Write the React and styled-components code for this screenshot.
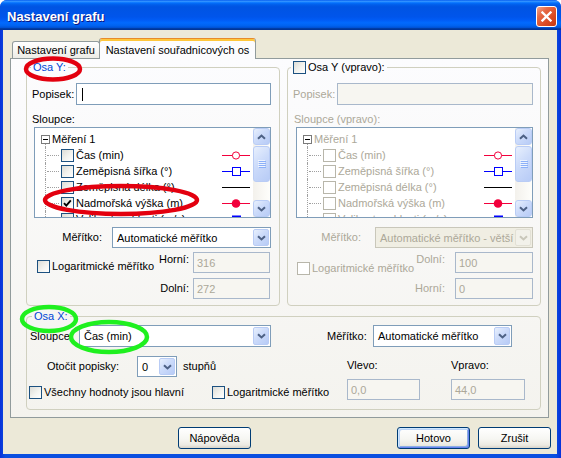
import React from 'react';
import styled, { createGlobalStyle, css } from 'styled-components';

const GlobalStyle = createGlobalStyle`
  html, body { margin: 0; padding: 0; background: #ffffff; }
  body {
    font-family: 'Liberation Sans', Tahoma, Arial, sans-serif;
    font-size: 11px;
    color: #000;
  }
  * { box-sizing: border-box; }
`;

const OFF = '#ACA899';

const Window = styled.div`
  position: relative;
  width: 561px;
  height: 458px;
  display: flex;
  flex-direction: column;
  overflow: hidden;
  border-radius: 7px 7px 0 0;
  background: linear-gradient(to right, #0831D9 0%, #0A4FE0 1%, #0A4FE0 99%, #0831D9 100%);
`;

const TitleBar = styled.div`
  height: 30px;
  flex: none;
  display: flex;
  align-items: center;
  padding: 3px 4px 0 7px;
  background: linear-gradient(to bottom, #0058EE 0%, #3593FF 4%, #288EFF 6%, #127DFF 8%, #036FFC 10%, #0262EE 14%, #0057E5 20%, #0054E3 24%, #0055EB 56%, #005BF5 66%, #026AFE 76%, #0062EF 86%, #0052D6 92%, #0040AB 94%, #003092 100%);
`;

const Title = styled.div`
  flex: 1;
  color: #fff;
  font-weight: bold;
  font-size: 13px;
  text-shadow: 1px 1px 0 #0A1883;
`;

const CloseBtn = styled.div`
  width: 21px;
  height: 21px;
  border: 1px solid #fff;
  border-radius: 3px;
  background: linear-gradient(135deg, #F3A58D 0%, #E66A45 30%, #DA4B24 65%, #C5380F 100%);
  display: flex;
  align-items: center;
  justify-content: center;
`;

const Frame = styled.div`
  flex: 1;
  margin: 0 4px 4px 3px;
  background: #ECE9D8;
  padding: 8px 8px 0 7px;
  display: flex;
  flex-direction: column;
`;

const TabStrip = styled.div`
  height: 20px;
  flex: none;
  display: flex;
  align-items: flex-end;
  padding-left: 2px;
`;

const Tab = styled.div`
  width: ${p => p.$w}px;
  display: flex;
  align-items: center;
  justify-content: center;
  white-space: nowrap;
  border: 1px solid #919B9C;
  border-radius: 3px 3px 0 0;
  ${p => p.$active ? css`
    height: 21px;
    margin: 0 0 -1px -1px;
    border-bottom: none;
    border-top-color: #E68B2C;
    box-shadow: inset 0 2px 0 #FFC73C;
    background: #FCFCFE;
    position: relative;
    z-index: 1;
    padding-top: 1px;
  ` : css`
    height: 17px;
    border-bottom: none;
    background: linear-gradient(to bottom, #FFFFFF 0%, #F7F7F4 50%, #ECEBE5 100%);
  `}
`;

const Panel = styled.div`
  height: 360px;
  flex: none;
  border: 1px solid #919B9C;
  background: linear-gradient(to bottom, #FCFCFE 0%, #F4F3EE 100%);
  padding: 2px 7px 0 15px;
`;

const TopGroups = styled.div`
  display: flex;
  gap: 7px;
`;

const Group = styled.fieldset`
  margin: ${p => p.$mt || 0}px 0 0 0;
  min-width: 0;
  width: ${p => p.$w}px;
  border: 1px solid #D0D0BF;
  border-radius: 4px;
  padding: 0 ${p => p.$pr ?? 8}px ${p => p.$pb ?? 6}px ${p => p.$pl ?? 5}px;
`;

const Legend = styled.legend`
  padding: 0 2px;
  margin-left: ${p => p.$ml || 0}px;
  line-height: 13px;
  height: 13px;
  color: ${p => p.$plain ? '#000' : '#0046D5'};
`;

const LegendInner = styled.span`
  display: inline-flex;
  align-items: center;
  gap: 2px;
  vertical-align: top;
  height: 13px;
`;

const FieldRow = styled.div`
  display: flex;
  align-items: ${p => p.$align || 'center'};
  justify-content: ${p => p.$justify || 'flex-start'};
  gap: ${p => p.$gap || 0}px;
  height: ${p => p.$h}px;
  margin-top: ${p => p.$mt || 0}px;
`;

const Label = styled.span`
  line-height: 13px;
  white-space: nowrap;
  flex: none;
  color: ${p => p.$off ? OFF : '#000'};
  ${p => p.$w != null && css`width: ${p.$w}px;`}
  margin: ${p => `${p.$mt || 0}px ${p.$mr || 0}px 0 ${p.$ml || 0}px`};
`;

const BlockLabel = styled.div`
  line-height: 13px;
  margin-top: ${p => p.$mt || 0}px;
  margin-left: ${p => p.$ml || 0}px;
  color: ${p => p.$off ? OFF : '#000'};
`;

const Spacer = styled.span`
  flex: 1;
`;

const TextBox = styled.div`
  ${p => p.$w != null ? css`width: ${p.$w}px; flex: none;` : css`flex: 1;`}
  height: ${p => p.$h || 21}px;
  border: 1px solid ${p => p.$off ? '#A9B8CB' : '#7F9DB9'};
  background: ${p => p.$off ? '#F7F6F1' : '#fff'};
  color: ${OFF};
  display: flex;
  align-items: center;
  padding-left: 3px;
  margin-right: ${p => p.$mr || 0}px;
  white-space: nowrap;
`;

const Caret = styled.span`
  width: 1px;
  height: 13px;
  margin-left: 2px;
  background: #000;
`;

const Combo = styled.div`
  width: ${p => p.$w}px;
  height: ${p => p.$h || 21}px;
  flex: none;
  border: 1px solid ${p => p.$off ? '#C9C7BA' : '#7F9DB9'};
  background: ${p => p.$off ? '#F0EEE3' : '#fff'};
  color: ${p => p.$off ? OFF : '#000'};
  display: flex;
  align-items: center;
  padding: 1px;
`;

const ComboText = styled.span`
  flex: 1;
  padding-left: 3px;
  white-space: nowrap;
  overflow: hidden;
`;

const blueBtn = css`
  background: linear-gradient(135deg, #E8F0FD 0%, #CCDBFA 45%, #B7CBF6 100%);
  border: 1px solid #B9CCF5;
  border-radius: 2px;
`;

const DropBtn = styled.span`
  width: 16px;
  align-self: stretch;
  flex: none;
  display: flex;
  align-items: center;
  justify-content: center;
  ${p => p.$off ? css`
    background: #F2F1EA;
    border: 1px solid #E2E0D5;
    border-radius: 2px;
  ` : blueBtn}
`;

const CheckWrap = styled.span`
  display: inline-flex;
  align-items: center;
  gap: 2px;
  flex: none;
  line-height: 13px;
  white-space: nowrap;
  color: ${p => p.$off ? OFF : '#000'};
  ${p => p.$w != null && css`width: ${p.$w}px;`}
  margin: ${p => `${p.$mt || 0}px 0 0 ${p.$ml || 0}px`};
`;

const Box = styled.span`
  width: 13px;
  height: 13px;
  flex: none;
  display: inline-flex;
  align-items: center;
  justify-content: center;
  border: 1px solid ${p => p.$off ? '#B8B6AA' : '#1C5180'};
  background: ${p => p.$off ? '#FFFFFF' : 'linear-gradient(135deg, #DCDCD6 0%, #F3F3EF 55%, #FFFFFF 100%)'};
`;

/* Tree */
const TreeBox = styled.div`
  width: 237px;
  height: 91px;
  margin: 1px 0 0 ${p => p.$ml || 0}px;
  border: 1px solid #7F9DB9;
  background: #fff;
  display: flex;
  overflow: hidden;
`;

const TreeList = styled.div`
  flex: 1;
  padding-top: 3px;
  overflow: hidden;
  color: ${p => p.$off ? OFF : '#000'};
`;

const TreeRow = styled.div`
  height: 16px;
  display: flex;
  align-items: center;
  white-space: nowrap;
`;

const Expander = styled.span`
  position: relative;
  width: 9px;
  height: 9px;
  margin: 0 2px 0 6px;
  flex: none;
  border: 1px solid #7A7A7A;
  background: #fff;
  &::before {
    content: '';
    position: absolute;
    left: 1px;
    top: 3px;
    width: 5px;
    height: 1px;
    background: #000;
  }
  &::after {
    content: '';
    position: absolute;
    left: 3px;
    top: 8px;
    height: 5px;
    border-left: 1px dotted #A0A0A0;
  }
`;

const Connector = styled.span`
  position: relative;
  width: 26px;
  align-self: stretch;
  flex: none;
  &::before {
    content: '';
    position: absolute;
    left: 10px;
    top: 0;
    bottom: 0;
    border-left: 1px dotted #A0A0A0;
  }
  &::after {
    content: '';
    position: absolute;
    left: 12px;
    right: 2px;
    top: 8px;
    border-top: 1px dotted #A0A0A0;
  }
`;

const ItemText = styled.span`
  margin-left: 2px;
  flex: 1;
`;

const MarkerSlot = styled.span`
  display: flex;
  margin-right: 3px;
  flex: none;
`;

const ScrollTrack = styled.div`
  width: 17px;
  flex: none;
  display: flex;
  flex-direction: column;
  background: linear-gradient(to right, #F3F1EC 0%, #FEFEFB 100%);
`;

const ScrollBtn = styled.div`
  height: 17px;
  flex: none;
  display: flex;
  align-items: center;
  justify-content: center;
  ${blueBtn}
  border-radius: 3px;
`;

const Thumb = styled.div`
  height: 36px;
  margin-top: 1px;
  flex: none;
  display: flex;
  align-items: center;
  justify-content: center;
  ${blueBtn}
  border-radius: 3px;
`;

const TrackFill = styled.div`
  flex: 1;
`;

/* Osa X */
const XBottom = styled.div`
  display: flex;
`;

const XLeft = styled.div`
  width: 317px;
  flex: none;
  display: flex;
  flex-direction: column;
`;

const ValueCol = styled.div`
  display: flex;
  flex-direction: column;
  width: ${p => p.$w}px;
  flex: none;
`;

const ButtonRow = styled.div`
  display: flex;
  margin: 9px -2px 0 0;
  padding-left: 168px;
`;

const Button = styled.button`
  width: 73px;
  height: 22px;
  padding: 0;
  margin-left: ${p => p.$ml || 0};
  border: 1px solid #003C74;
  border-radius: 3px;
  font-family: 'Liberation Sans', Tahoma, Arial, sans-serif;
  font-size: 11px;
  color: #000;
  background: linear-gradient(to bottom, #FFFFFF 0%, #F6F6F2 55%, #ECEAE2 85%, #D8D3C8 100%);
  ${p => p.$default && css`
    box-shadow: inset 1px 1px 0 #CEE7FF, inset -1px -1px 0 #6982EE, inset 2px 2px 0 #BCD4F6, inset -2px -2px 0 #89ADE4;
  `}
`;

const Overlay = styled.svg`
  position: absolute;
  left: 0;
  top: 0;
  pointer-events: none;
`;

/* drawings */
const Chevron = ({ dir = 'down', color = '#4D6185' }) => (
  <svg width="9" height="6" viewBox="0 0 9 6">
    <path
      d={dir === 'down' ? 'M1 1.2 L4.5 4.5 L8 1.2' : 'M1 4.8 L4.5 1.5 L8 4.8'}
      stroke={color}
      strokeWidth="2"
      fill="none"
    />
  </svg>
);

const Grip = () => (
  <svg width="8" height="8" viewBox="0 0 8 8">
    {[0.5, 2.5, 4.5, 6.5].map(y => (
      <g key={y}>
        <line x1="0" y1={y} x2="7" y2={y} stroke="#EEF4FE" strokeWidth="1" />
        <line x1="1" y1={y + 1} x2="8" y2={y + 1} stroke="#8CB0F8" strokeWidth="1" />
      </g>
    ))}
  </svg>
);

const CheckMark = () => (
  <svg width="11" height="11" viewBox="0 0 11 11">
    <path d="M2 5.2 L4.3 7.6 L8.8 2.4" stroke="#000" strokeWidth="1.9" fill="none" />
  </svg>
);

const CloseX = () => (
  <svg width="11" height="11" viewBox="0 0 11 11">
    <path d="M1.5 1.5 L9.5 9.5 M9.5 1.5 L1.5 9.5" stroke="#fff" strokeWidth="2.3" strokeLinecap="square" />
  </svg>
);

const Marker = ({ kind }) => {
  const col = { circle: '#F2003C', square: '#0000FF', line: '#000000', dot: '#F2003C', block: '#0000FF' }[kind];
  return (
    <svg width="28" height="11" viewBox="0 0 28 11">
      <line x1="0" y1="5.5" x2="28" y2="5.5" stroke={col} strokeWidth="1" />
      {kind === 'circle' && <circle cx="14" cy="5.5" r="3.6" fill="#fff" stroke={col} strokeWidth="1" />}
      {kind === 'square' && <rect x="10.5" y="1.5" width="8" height="8" fill="#fff" stroke={col} strokeWidth="1" />}
      {kind === 'dot' && <circle cx="14" cy="5.5" r="4.3" fill={col} />}
      {kind === 'block' && <rect x="10" y="1.5" width="9" height="8" fill={col} />}
    </svg>
  );
};

const Checkbox = ({ checked, off, children, ...rest }) => (
  <CheckWrap $off={off} {...rest}>
    <Box $off={off}>{checked && <CheckMark />}</Box>
    {children}
  </CheckWrap>
);

const ComboBox = ({ text, w, h, off }) => (
  <Combo $w={w} $h={h} $off={off}>
    <ComboText>{text}</ComboText>
    <DropBtn $off={off}>
      <Chevron color={off ? '#C9C7BA' : '#4D6185'} />
    </DropBtn>
  </Combo>
);

const items = [
  { text: 'Čas (min)', kind: 'circle' },
  { text: 'Zeměpisná šířka (°)', kind: 'square' },
  { text: 'Zeměpisná délka (°)', kind: 'line' },
  { text: 'Nadmořská výška (m)', kind: 'dot', checked: true },
  { text: 'Velikost rychlosti (m/s)', kind: 'block' },
];

const Tree = ({ off, ml, checkedItem }) => (
  <TreeBox $ml={ml}>
    <TreeList $off={off}>
      <TreeRow>
        <Expander />
        <span>Měření 1</span>
      </TreeRow>
      {items.map(it => (
        <TreeRow key={it.text}>
          <Connector />
          <Box $off={off}>{checkedItem && it.checked && <CheckMark />}</Box>
          <ItemText>{it.text}</ItemText>
          <MarkerSlot>
            <Marker kind={it.kind} />
          </MarkerSlot>
        </TreeRow>
      ))}
    </TreeList>
    <ScrollTrack>
      <ScrollBtn><Chevron dir="up" /></ScrollBtn>
      <Thumb><Grip /></Thumb>
      <TrackFill />
      <ScrollBtn><Chevron dir="down" /></ScrollBtn>
    </ScrollTrack>
  </TreeBox>
);

export default function App() {
  return (
    <>
      <GlobalStyle />
      <Window>
        <TitleBar>
          <Title>Nastavení grafu</Title>
          <CloseBtn><CloseX /></CloseBtn>
        </TitleBar>
        <Frame>
          <TabStrip>
            <Tab $w={88}>Nastavení grafu</Tab>
            <Tab $w={157} $active>Nastavení souřadnicových os</Tab>
          </TabStrip>
          <Panel>
            <TopGroups>
              <Group $w={254}>
                <Legend $ml={-1}>Osa Y:</Legend>
                <FieldRow $mt={9} $h={22} $gap={2}>
                  <Label>Popisek:</Label>
                  <TextBox $h={22}><Caret /></TextBox>
                </FieldRow>
                <BlockLabel $mt={8}>Sloupce:</BlockLabel>
                <Tree ml={2} checkedItem />
                <FieldRow $mt={9} $h={21} $justify="flex-end">
                  <Label $mr={10}>Měřítko:</Label>
                  <ComboBox w={159} text="Automatické měřítko" />
                </FieldRow>
                <FieldRow $mt={4} $h={21} $align="flex-start">
                  <Checkbox $ml={5} $mt={8}>Logaritmické měřítko</Checkbox>
                  <Spacer />
                  <Label $mt={1} $mr={4}>Horní:</Label>
                  <TextBox $w={77} $mr={1} $off>316</TextBox>
                </FieldRow>
                <FieldRow $mt={5} $h={21} $justify="flex-end">
                  <Label $mr={4}>Dolní:</Label>
                  <TextBox $w={77} $mr={1} $off>272</TextBox>
                </FieldRow>
              </Group>

              <Group $w={254} $pr={7}>
                <Legend $ml={-2} $plain>
                  <LegendInner><Box />Osa Y (vpravo):</LegendInner>
                </Legend>
                <FieldRow $mt={9} $h={22} $gap={2}>
                  <Label $off>Popisek:</Label>
                  <TextBox $h={22} $off />
                </FieldRow>
                <BlockLabel $mt={8} $ml={1} $off>Sloupce (vpravo):</BlockLabel>
                <Tree ml={3} off />
                <FieldRow $mt={9} $h={21} $justify="flex-end">
                  <Label $mr={14} $off>Měřítko:</Label>
                  <ComboBox w={158} text="Automatické měřítko - větší" off />
                </FieldRow>
                <FieldRow $mt={4} $h={21} $align="flex-start">
                  <Checkbox $ml={4} $mt={10} off>Logaritmické měřítko</Checkbox>
                  <Spacer />
                  <Label $mt={1} $mr={10} $off>Dolní:</Label>
                  <TextBox $w={78} $off>100</TextBox>
                </FieldRow>
                <FieldRow $mt={5} $h={21} $justify="flex-end">
                  <Label $mr={10} $off>Horní:</Label>
                  <TextBox $w={78} $off>0</TextBox>
                </FieldRow>
              </Group>
            </TopGroups>

            <Group $w={515} $mt={4} $pl={3} $pb={9}>
              <Legend $ml={2}>Osa X:</Legend>
              <FieldRow $mt={2} $h={22}>
                <Label $w={49}>Sloupce:</Label>
                <ComboBox w={192} h={22} text="Čas (min)" />
                <Label $w={46} $ml={56}>Měřítko:</Label>
                <ComboBox w={139} h={22} text="Automatické měřítko" />
              </FieldRow>
              <XBottom>
                <XLeft>
                  <FieldRow $mt={9} $h={21}>
                    <Label $w={90} $ml={17}>Otočit popisky:</Label>
                    <ComboBox w={40} text="0" />
                    <Label $ml={6}>stupňů</Label>
                  </FieldRow>
                  <FieldRow $mt={9} $h={13}>
                    <Checkbox $ml={-1} $w={183}>Všechny hodnoty jsou hlavní</Checkbox>
                    <Checkbox>Logaritmické měřítko</Checkbox>
                  </FieldRow>
                </XLeft>
                <ValueCol $w={104}>
                  <Label $mt={12}>Vlevo:</Label>
                  <FieldRow $mt={7} $h={21}>
                    <TextBox $w={73} $off>0,0</TextBox>
                  </FieldRow>
                </ValueCol>
                <ValueCol $w={74}>
                  <Label $mt={12}>Vpravo:</Label>
                  <FieldRow $mt={7} $h={21}>
                    <TextBox $w={74} $off>44,0</TextBox>
                  </FieldRow>
                </ValueCol>
              </XBottom>
            </Group>
          </Panel>

          <ButtonRow>
            <Button>Nápověda</Button>
            <Button $default $ml="auto">Hotovo</Button>
            <Button $ml="8px">Zrušit</Button>
          </ButtonRow>
        </Frame>

        <Overlay width="561" height="458" viewBox="0 0 561 458">
          <ellipse cx="53" cy="69" rx="27" ry="10.5" fill="none" stroke="#E3000F" strokeWidth="4.5" />
          <ellipse cx="121" cy="200" rx="76" ry="14" fill="none" stroke="#E3000F" strokeWidth="4.5" />
          <ellipse cx="49" cy="319" rx="27" ry="12" fill="none" stroke="#1FF01F" strokeWidth="4.5" />
          <ellipse cx="109" cy="337" rx="38" ry="15" fill="none" stroke="#1FF01F" strokeWidth="4.5" />
        </Overlay>
      </Window>
    </>
  );
}
